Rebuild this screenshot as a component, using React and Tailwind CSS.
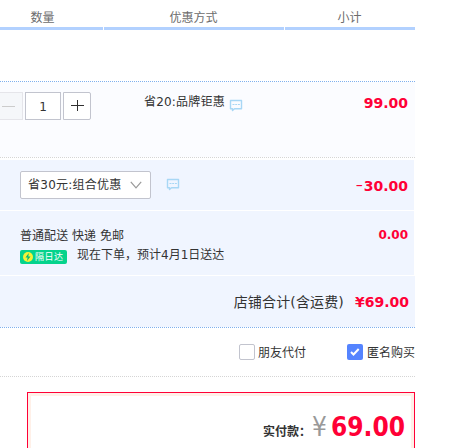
function ChatIcon({ className }) {
  return (
    <svg className={className} width="14" height="13" viewBox="0 0 14 13" fill="none">
      <path d="M1.5 1.5h11v8.2h-7l-2 1.8v-1.8h-2z" stroke="#a8d7f5" strokeWidth="1.4" strokeLinejoin="round" />
      <path d="M3.5 5.5h2M6.2 5.5h1.9M8.9 5.5h2" stroke="#a8d7f5" />
    </svg>
  );
}

function Header() {
  return (
    <div className="flex h-[30px] gap-px pr-[37px] text-center text-[12px] leading-[37px] text-[#6c6c6c]">
      <div className="w-[103px] shrink-0 border-b-3 border-[#b2d1ff] pr-[18px]">数量</div>
      <div className="w-[180px] shrink-0 border-b-3 border-[#b2d1ff] pr-px">优惠方式</div>
      <div className="w-[130px] shrink-0 border-b-3 border-[#b2d1ff] pr-px">小计</div>
    </div>
  );
}

function DottedLine({ color }) {
  return (
    <svg className="block shrink-0" width="415" height="1" shapeRendering="crispEdges">
      <path d="M0 .5h415" stroke={color} strokeDasharray="1 1" />
    </svg>
  );
}

function Stepper() {
  return (
    <div className="flex h-7 w-[91px] gap-[2px]">
      <button className="flex w-[23px] items-center justify-center border border-l-0 border-[#e5e5ea] bg-[#f5f7fa] pr-[5px]">
        <svg width="13" height="13" shapeRendering="crispEdges"><path d="M0 6.5h13" stroke="#cccccc" /></svg>
      </button>
      <div className="w-9 border border-[#c2c4ce] bg-white text-center text-[12px] leading-[28px] text-[#333]">1</div>
      <button className="flex w-7 items-start justify-center rounded-r-[2px] border border-[#c2c4ce] bg-white pt-[6px]">
        <svg width="13" height="13" shapeRendering="crispEdges"><path d="M0 6.5h13M6.5 1v11" stroke="#303030" /></svg>
      </button>
    </div>
  );
}

const price = "font-['DejaVu_Sans','Noto_Sans_CJK_SC',sans-serif] font-bold text-[#ff0036] whitespace-nowrap";

export default function App() {
  return (
    <div className="h-[448px] w-[452px] overflow-hidden bg-white font-['DejaVu_Sans','Noto_Sans_CJK_SC',sans-serif] text-[12px] leading-[18px] text-[#333]">
      <Header />
      <div className="h-[51px]" />
      <DottedLine color="#7fb0ee" />
      <div className="flex h-[75px] w-[415px] items-start bg-[#fbfcff] pr-[7px]">
        <div className="pt-[10px]"><Stepper /></div>
        <div className="ml-[53px] flex pt-[11px]">
          <span className="w-[85px] tracking-[0.2px] whitespace-nowrap">省20:品牌钜惠</span>
          <ChatIcon className="mt-[6px]" />
        </div>
        <div className={`${price} ml-auto pt-[12px] text-[14px]`}>99.00</div>
      </div>
      <DottedLine color="#d5d5d5" />
      <div className="mt-[2px] flex h-[50px] w-[414px] items-start bg-[#f0f5ff] pr-[6px]">
        <div className="mt-[11px] ml-5 flex h-7 w-[131px] items-center justify-between rounded-[2px] border border-[#c2c4ce] bg-white pr-2 pl-[7px]">
          <span className="tracking-[0.25px] whitespace-nowrap">省30元:组合优惠</span>
          <svg width="12" height="8" viewBox="0 0 12 8" fill="none"><path d="M.8.8 6 6.8 11.2.8" stroke="#999" strokeWidth="1.2" /></svg>
        </div>
        <ChatIcon className="mt-[18px] ml-[15px]" />
        <div className={`${price} ml-auto flex pt-[17px] text-[14px]`}>
          <span className="mr-px inline-block origin-right -translate-y-px scale-x-150 font-normal">-</span>
          <span>30.00</span>
        </div>
      </div>
      <div className="mt-px flex h-16 w-[414px] justify-between bg-[#f0f5ff] pr-[6px] pl-5">
        <div className="pt-4">
          <div className="tracking-[0.05px]">普通配送 快递 免邮</div>
          <div className="flex items-center">
            <div className="mt-[5px] mr-[10px] flex h-[14px] w-[47px] items-center gap-[2px] rounded-[2px] bg-[#05d38c] pl-[3px] text-[9px] leading-[14px] text-white">
              <svg className="shrink-0" width="10" height="10" viewBox="0 0 10 10">
                <circle cx="5" cy="5" r="5" fill="#f4f238" />
                <path d="M5.8 1 2.5 5.4h2.1L4 9l3.5-4.6H5.3z" fill="#05b878" />
              </svg>
              <span className="tracking-[0.5px] whitespace-nowrap">隔日达</span>
            </div>
            <span className="mt-px whitespace-nowrap">现在下单，预计4月1日送达</span>
          </div>
        </div>
        <div className={`${price} pt-[15px] text-[12px]`}>0.00</div>
      </div>
      <div className="mt-px flex h-[51px] w-[415px] items-center justify-end bg-[#f0f5ff] pr-[6px]">
        <span className="text-[14px] tracking-[0.15px] whitespace-nowrap">店铺合计(含运费)</span>
        <span className={`${price} ml-[11px] text-[14px]`}>¥69.00</span>
      </div>
      <DottedLine color="#7fb0ee" />
      <div className="flex h-12 w-[415px] items-center justify-end">
        <span className="mr-[3px] size-4 rounded-[2px] border border-[#c2c4ce] bg-white" />
        <span className="pt-px">朋友代付</span>
        <span className="mr-[4px] ml-[41px] flex size-4 items-center justify-center rounded-[2px] bg-[#5584ff]">
          <svg width="10" height="8" viewBox="0 0 10 8" fill="none"><path d="m1 4 2.5 2.5L8.7 1" stroke="#fff" strokeWidth="2" /></svg>
        </span>
        <span className="pt-px">匿名购买</span>
      </div>
      <DottedLine color="#d5d5d5" />
      <div className="mt-[15px] ml-[27px] h-[100px] w-[388px] border border-[#ff0036]">
        <div className="flex h-full items-baseline justify-end border-3 border-[#fff0e8] pt-[13px] pr-[6px] font-['DejaVu_Sans_Condensed','Noto_Sans_CJK_SC',sans-serif]">
          <span className="font-bold whitespace-nowrap">实付款：</span>
          <span className="ml-px text-[26px] leading-[36px] text-[#999]">¥</span>
          <span className="ml-[4px] text-[26px] leading-[36px] font-bold text-[#ff0036]">69.00</span>
        </div>
      </div>
    </div>
  );
}
